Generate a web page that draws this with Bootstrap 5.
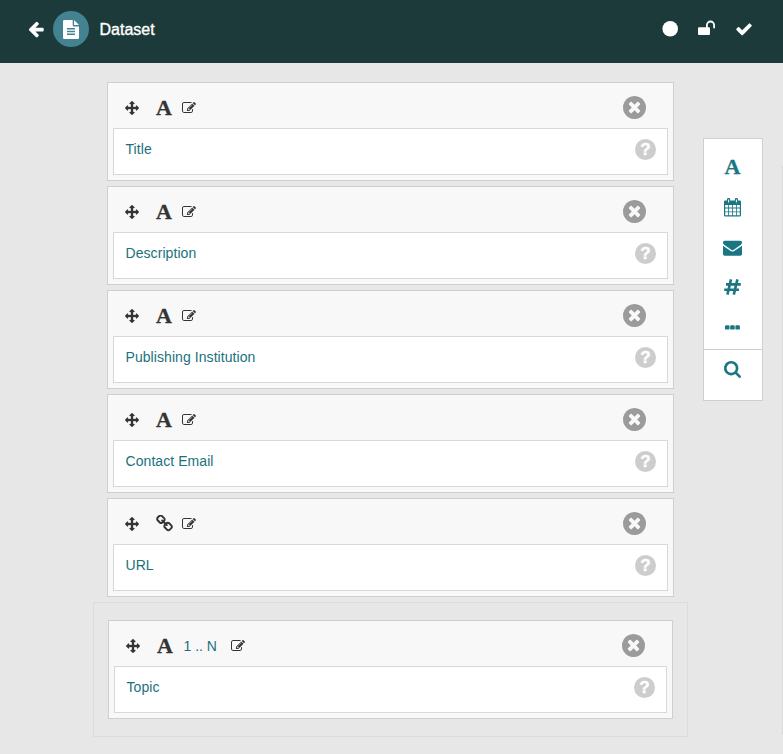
<!DOCTYPE html>
<html lang="en">
<head>
<meta charset="utf-8">
<meta name="viewport" content="width=device-width, initial-scale=1">
<title>Dataset</title>
<link href="https://cdn.jsdelivr.net/npm/bootstrap@5.3.0/dist/css/bootstrap.min.css" rel="stylesheet">
<style>
body{background:#e7e7e7;font-family:"Liberation Sans",Arial,sans-serif;font-size:14px;line-height:20px;color:#1b717c;height:754px;overflow:hidden}
svg{display:block;fill:currentColor;flex:none}
.topbar{height:63px;background:#1d3a3a;padding:0 30px 5px 27px}
.doc-disc{width:36px;height:36px;background:#438290;margin-left:8px}
.topbar h1{font-size:16px;line-height:20px;margin:2px 0 0 10.5px;-webkit-text-stroke:.35px #fff}
.fields{width:567px;margin:19px 0 0 107px;gap:5px}
.field-box{background:#f8f8f8;border:1px solid #cfcfcf;padding:0 5px 5px}
.field-head{height:45px;padding:4px 22px 0 11.5px;color:#333}
.move{stroke:currentColor;stroke-width:40}
.letter{font:bold 22px/22px "Liberation Serif","Times New Roman",serif;width:16px;text-align:center;-webkit-text-stroke:.3px currentColor}
.kind{width:17px;margin-left:17px}
.edit{margin-left:9.5px}
.field-body{height:47px;background:#fff;border:1px solid #d8d8d8;padding:10px 11px 0 11.5px;letter-spacing:.07px}
.help{width:21px;height:21px;background:#cdcdcd;font-size:17px;line-height:21px;-webkit-text-stroke:.4px #fff}
.close-x{color:#9b9b9b}
.repeat{width:595px;margin:0 0 0 -14px;border:1px solid #dcdcdc;padding:17px 14px}
.repeat .count{margin:0 5px 0 10px;color:#1b717c}
.tools{width:60px;height:263px;margin:75px 0 0 29px;background:#fff;border:1px solid #cfcfcf;color:#1a7683}
.tool{height:40px;padding-right:1px}
.tool-list{height:211px;padding-top:8px;border-bottom:1px solid #cfcfcf}
.tool-search{height:38px}
.edge{width:1px;height:569px;background:#d9d9d9;margin:103px 0 0 auto}
</style>
</head>
<body>
<svg width="0" height="0" class="position-absolute">
<symbol id="i-move" viewBox="0 0 1792 1792"><path d="M1792 896q0 26-19 45l-256 256q-19 19-45 19t-45-19-19-45v-128h-384v384h128q26 0 45 19t19 45-19 45l-256 256q-19 19-45 19t-45-19l-256-256q-19-19-19-45t19-45 45-19h128v-384h-384v128q0 26-19 45t-45 19-45-19l-256-256q-19-19-19-45t19-45l256-256q19-19 45-19t45 19 19 45v128h384v-384h-128q-26 0-45-19t-19-45 19-45l256-256q19-19 45-19t45 19l256 256q19 19 19 45t-19 45-45 19h-128v384h384v-128q0-26 19-45t45-19 45 19l256 256q19 19 19 45z"/></symbol>
<symbol id="i-edit" viewBox="0 0 1792 1792"><path d="M888 1184l116-116-152-152-116 116v56h96v96h56zm440-720q-16-16-33 1l-350 350q-17 17-1 33t33-1l350-350q17-17 1-33zm80 594v190q0 119-84.5 203.5t-203.5 84.5h-832q-119 0-203.5-84.5t-84.5-203.5v-832q0-119 84.5-203.5t203.5-84.5h832q63 0 117 25 15 7 18 23 3 17-9 29l-49 49q-14 14-32 8-23-6-45-6h-832q-66 0-113 47t-47 113v832q0 66 47 113t113 47h832q66 0 113-47t47-113v-126q0-13 9-22l64-64q15-15 35-7t20 29zm-96-738l288 288-672 672h-288v-288zm444 132l-92 92-288-288 92-92q28-28 68-28t68 28l152 152q28 28 28 68t-28 68z"/></symbol>
<symbol id="i-close" viewBox="128 128 1536 1536"><path d="M1277 1122q0-26-19-45l-181-181 181-181q19-19 19-45 0-27-19-46l-90-90q-19-19-46-19-26 0-45 19l-181 181-181-181q-19-19-45-19-27 0-46 19l-90 90q-19 19-19 46 0 26 19 45l181 181-181 181q-19 19-19 45 0 27 19 46l90 90q19 19 46 19 26 0 45-19l181-181 181 181q19 19 45 19 27 0 46-19l90-90q19-19 19-46zm387-226q0 209-103 385.5t-279.5 279.5-385.5 103-385.5-103-279.5-279.5-103-385.5 103-385.5 279.5-279.5 385.5-103 385.5 103 279.5 279.5 103 385.5z"/></symbol>
</svg>

<header class="topbar d-flex align-items-center text-white">
  <svg width="18" height="18" viewBox="0 0 1792 1792"><path d="M1664 896v128q0 53-32.5 90.5t-84.5 37.5h-704l293 294q38 36 38 90t-38 90l-75 76q-37 37-90 37-52 0-91-37l-651-652q-37-37-37-90 0-52 37-91l651-650q38-38 91-38 52 0 90 38l75 74q38 38 38 91t-38 91l-293 293h704q52 0 84.5 37.5t32.5 90.5z"/></svg>
  <span class="doc-disc rounded-circle d-flex align-items-center justify-content-center">
    <svg width="16" height="19" viewBox="0 0 16 19"><path fill-rule="evenodd" d="M1.3 0H9.7V5.3Q9.7 6.4 10.8 6.4H16V17.7Q16 19 14.7 19H1.3Q0 19 0 17.7V1.3Q0 0 1.3 0ZM4 8V9.4H12V8ZM4 10.8V12.2H12V10.8ZM4 13.6V15H12V13.6ZM11 .3Q11.5.5 12 1L15.2 4.1Q15.6 4.6 15.8 5.1H11Z"/></svg>
  </span>
  <h1 class="fw-normal">Dataset</h1>
  <div class="d-flex align-items-center ms-auto">
    <svg width="16" height="16" viewBox="0 0 16 16"><circle cx="8.2" cy="7.8" r="7.8"/></svg>
    <svg class="ms-3" width="25" height="18" viewBox="0 0 25 18"><path d="M5 7.3H12V5.1A4.5 4.5 0 0 1 21 5.1V7.5Q21 8.4 20.1 8.4Q19.2 8.4 19.2 7.5V5.1A2.7 2.7 0 0 0 13.8 5.1V7.3H14.8Q16 7.3 16 8.5V14Q16 15.1 14.8 15.1H5Q4 15.1 4 14V8.5Q4 7.3 5 7.3Z"/></svg>
    <svg class="ms-3" width="18" height="18" viewBox="0 0 1792 1792"><path d="M1671 566q0 40-28 68l-724 724-136 136q-28 28-68 28t-68-28l-136-136-362-362q-28-28-28-68t28-68l136-136q28-28 68-28t68 28l294 295 656-657q28-28 68-28t68 28l136 136q28 28 28 68z"/></svg>
  </div>
</header>

<div class="d-flex align-items-start">
<main class="fields d-flex flex-column flex-shrink-0">
  <section class="field-box">
    <div class="field-head d-flex align-items-center"><svg class="move" width="14" height="14"><use href="#i-move"/></svg><span class="kind letter">A</span><svg class="edit" width="14" height="14"><use href="#i-edit"/></svg><svg class="close-x ms-auto" width="23" height="23"><use href="#i-close"/></svg></div>
    <div class="field-body d-flex align-items-start justify-content-between"><span>Title</span><b class="help rounded-circle text-white text-center">?</b></div>
  </section>
  <section class="field-box">
    <div class="field-head d-flex align-items-center"><svg class="move" width="14" height="14"><use href="#i-move"/></svg><span class="kind letter">A</span><svg class="edit" width="14" height="14"><use href="#i-edit"/></svg><svg class="close-x ms-auto" width="23" height="23"><use href="#i-close"/></svg></div>
    <div class="field-body d-flex align-items-start justify-content-between"><span>Description</span><b class="help rounded-circle text-white text-center">?</b></div>
  </section>
  <section class="field-box">
    <div class="field-head d-flex align-items-center"><svg class="move" width="14" height="14"><use href="#i-move"/></svg><span class="kind letter">A</span><svg class="edit" width="14" height="14"><use href="#i-edit"/></svg><svg class="close-x ms-auto" width="23" height="23"><use href="#i-close"/></svg></div>
    <div class="field-body d-flex align-items-start justify-content-between"><span>Publishing Institution</span><b class="help rounded-circle text-white text-center">?</b></div>
  </section>
  <section class="field-box">
    <div class="field-head d-flex align-items-center"><svg class="move" width="14" height="14"><use href="#i-move"/></svg><span class="kind letter">A</span><svg class="edit" width="14" height="14"><use href="#i-edit"/></svg><svg class="close-x ms-auto" width="23" height="23"><use href="#i-close"/></svg></div>
    <div class="field-body d-flex align-items-start justify-content-between"><span>Contact Email</span><b class="help rounded-circle text-white text-center">?</b></div>
  </section>
  <section class="field-box">
    <div class="field-head d-flex align-items-center"><svg class="move" width="14" height="14"><use href="#i-move"/></svg><svg class="kind" height="17" viewBox="64 64 1664 1664"><path d="M1520 1216q0-40-28-68l-208-208q-28-28-68-28-42 0-72 32 3 3 19 18.5t21.5 21.5 15 19 13 25.5 3.5 27.5q0 40-28 68t-68 28q-15 0-27.5-3.5t-25.5-13-19-15-21.5-21.5-18.5-19q-33 31-33 73 0 40 28 68l206 207q27 27 68 27 40 0 68-26l147-146q28-28 28-67zm-703-705q0-40-28-68l-206-207q-28-28-68-28-39 0-68 27l-147 146q-28 28-28 67 0 40 28 68l208 208q27 27 68 27 42 0 72-31-3-3-19-18.5t-21.5-21.5-15-19-13-25.5-3.5-27.5q0-40 28-68t68-28q15 0 27.5 3.5t25.5 13 19 15 21.5 21.5 18.5 19q33-31 33-73zm895 705q0 120-85 203l-147 146q-83 83-203 83-121 0-204-85l-206-207q-83-83-83-203 0-123 88-209l-88-88q-86 88-208 88-120 0-204-84l-208-208q-84-84-84-204t85-203l147-146q83-83 203-83 121 0 204 85l206 207q83 83 83 203 0 123-88 209l88 88q86-88 208-88 120 0 204 84l208 208q84 84 84 204z"/></svg><svg class="edit" width="14" height="14"><use href="#i-edit"/></svg><svg class="close-x ms-auto" width="23" height="23"><use href="#i-close"/></svg></div>
    <div class="field-body d-flex align-items-start justify-content-between"><span>URL</span><b class="help rounded-circle text-white text-center">?</b></div>
  </section>
  <div class="repeat">
    <section class="field-box">
      <div class="field-head d-flex align-items-center"><svg class="move" width="14" height="14"><use href="#i-move"/></svg><span class="kind letter">A</span><span class="count">1 .. N</span><svg class="edit" width="14" height="14"><use href="#i-edit"/></svg><svg class="close-x ms-auto" width="23" height="23"><use href="#i-close"/></svg></div>
      <div class="field-body d-flex align-items-start justify-content-between"><span>Topic</span><b class="help rounded-circle text-white text-center">?</b></div>
    </section>
  </div>
</main>

<aside class="tools flex-shrink-0">
  <div class="tool-list">
    <div class="tool d-flex align-items-center justify-content-center"><span class="letter">A</span></div>
    <div class="tool d-flex align-items-center justify-content-center"><svg width="17" height="19" viewBox="0 0 17 19"><path fill-rule="evenodd" d="M1.3 2.5H3V1.5A1.6 1.6 0 0 1 6.2 1.5V2.5H10.8V1.5A1.6 1.6 0 0 1 14 1.5V2.5H15.7Q17 2.5 17 3.8V17.3Q17 18.5 15.7 18.5H1.3Q0 18.5 0 17.3V3.8Q0 2.5 1.3 2.5ZM4.1 1.4V4.6H5.1V1.4ZM11.9 1.4V4.6H12.9V1.4ZM1.2 7V9.6H4.2V7ZM5 7V9.6H8.1V7ZM8.9 7V9.6H12V7ZM12.8 7V9.6H15.8V7ZM1.2 10.4V13.4H4.2V10.4ZM5 10.4V13.4H8.1V10.4ZM8.9 10.4V13.4H12V10.4ZM12.8 10.4V13.4H15.8V10.4ZM1.2 14.2V17.3H4.2V14.2ZM5 14.2V17.3H8.1V14.2ZM8.9 14.2V17.3H12V14.2ZM12.8 14.2V17.3H15.8V14.2Z"/></svg></div>
    <div class="tool d-flex align-items-center justify-content-center"><svg width="19" height="19" viewBox="0 0 1792 1792"><path d="M1792 710v794q0 66-47 113t-113 47h-1472q-66 0-113-47t-47-113v-794q44 49 101 87 362 246 497 345 57 42 92.5 65.5t94.5 48 110 24.5h2q51 0 110-24.5t94.5-48 92.5-65.5q170-123 498-345 57-39 100-87zm0-294q0 79-49 151t-122 123q-376 261-468 325-10 7-42.5 31t-54 38.5-52 32.5-57.5 27-50 9h-2q-23 0-50-9t-57.5-27-52-32.5-54-38.5-42.5-31q-91-64-262-182.5t-205-142.5q-62-42-117-115.5t-55-136.5q0-78 41.5-130t118.5-52h1472q65 0 112.5 47t47.5 113z"/></svg></div>
    <div class="tool d-flex align-items-center justify-content-center"><svg width="17" height="16" viewBox="0 0 17 16"><path d="M7 .4L3.4 15.6M13.4 .4L9.8 15.6M2 5.4H16.8M.2 10.8H15" fill="none" stroke="currentColor" stroke-width="2.6"/></svg></div>
    <div class="tool d-flex align-items-center justify-content-center"><svg width="15" height="5" viewBox="0 0 15 5"><rect y=".3" width="4.5" height="4.3" rx="1.2"/><rect x="5.2" y=".3" width="4.5" height="4.3" rx="1.2"/><rect x="10.4" y=".3" width="4.5" height="4.3" rx="1.2"/></svg></div>
  </div>
  <div class="tool tool-search d-flex align-items-center justify-content-center"><svg width="17" height="17" viewBox="64 128 1664 1664"><path d="M1216 832q0-185-131.5-316.5t-316.5-131.5-316.5 131.5-131.5 316.5 131.5 316.5 316.5 131.5 316.5-131.5 131.5-316.5zm512 832q0 52-38 90t-90 38q-54 0-90-38l-343-342q-179 124-399 124-143 0-273.5-55.5t-225-150-150-225-55.5-273.5 55.5-273.5 150-225 225-150 273.5-55.5 273.5 55.5 225 150 150 225 55.5 273.5q0 220-124 399l343 343q37 37 37 90z"/></svg></div>
</aside>
<div class="edge"></div>
</div>
<script src="https://cdn.jsdelivr.net/npm/bootstrap@5.3.0/dist/js/bootstrap.bundle.min.js"></script>
</body>
</html>
